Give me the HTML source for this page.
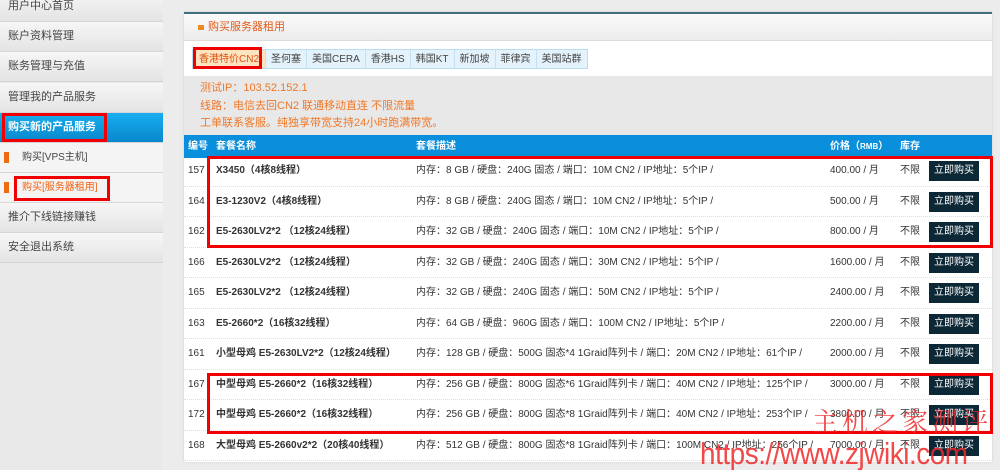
<!DOCTYPE html>
<html><head><meta charset="utf-8"><style>
*{margin:0;padding:0;box-sizing:border-box}
html,body{width:1000px;height:470px;overflow:hidden}
body{background:#ececec;font-family:"Liberation Sans","Noto Sans CJK SC",sans-serif;font-size:11px;color:#333;position:relative}
.side{position:absolute;left:0;top:0;width:163px;height:470px;background:#e9e9e9}
.si{position:absolute;left:0;width:163px;height:30px;line-height:29px;padding-left:8px;color:#444;font-size:11px;background:linear-gradient(#f6f6f6,#e4e4e4);border-bottom:1px solid #d5d5d5}
.sub{background:#f4f4f4;padding-left:22px;font-size:10px}
.rb{position:absolute;border:3px solid #f00000}
.panel{position:absolute;left:184px;top:12px;width:808px;height:450px;background:#fff;border-top:2px solid #3f6e80;box-shadow:0 0 2px #ccc}
.ph{height:27px;background:linear-gradient(#fafafa,#ececec);border-bottom:1px solid #ddd;line-height:27px;padding-left:24px;color:#e05a1a;font-size:11px;position:relative}
.ph:before{content:"";position:absolute;left:14px;top:11px;width:6px;height:5px;background:#f08a20}
.tabs{position:absolute;left:8px;top:35px;height:20px;display:flex;border:1px solid #b8dcf0;background:#e3f2fb}
.tab{padding:0 5px;line-height:19px;font-size:10px;color:#444;border-right:1px solid #c5e0f0;white-space:nowrap}
.info{position:absolute;left:0;top:62px;width:808px;height:59px;background:#e8e8e8;padding:4px 0 0 16px;color:#f07828;font-size:11px;line-height:17.5px}
.th{position:absolute;left:0;top:121px;width:808px;height:23px;background:#0a8fdc;color:#fff;font-weight:bold;font-size:10px;line-height:23px}
.row{position:absolute;left:0;width:808px;height:30.5px;border-bottom:1px dotted #ddd;line-height:30px;font-size:10px}
.c{position:absolute;white-space:nowrap}
.btn{position:absolute;left:745px;top:5px;width:50px;height:20px;background:#0c2836;color:#fff;line-height:20px;text-align:center;font-size:10px}
.wm{position:absolute;color:rgba(240,40,40,.85);white-space:nowrap;line-height:1}
</style></head><body>
<div class="side">
<div class="si" style="top:-8px">用户中心首页</div>
<div class="si" style="top:22px">账户资料管理</div>
<div class="si" style="top:52px">账务管理与充值</div>
<div class="si" style="top:83px">管理我的产品服务</div>
<div class="si" style="top:113px;background:linear-gradient(#17aef0,#0a86cc);color:#fff;font-weight:bold">购买新的产品服务</div>
<div class="si sub" style="top:143px">购买[VPS主机]</div>
<div class="si sub" style="top:173px;color:#f06010">购买[服务器租用]</div>
<div class="si" style="top:203px">推介下线链接赚钱</div>
<div class="si" style="top:233px">安全退出系统</div>
<div style="position:absolute;left:4px;top:152px;width:5px;height:11px;background:#f06a10"></div>
<div style="position:absolute;left:4px;top:182px;width:5px;height:11px;background:#f06a10"></div>
</div>
<div class="rb" style="left:2px;top:113px;width:105px;height:29px"></div>
<div class="rb" style="left:14px;top:176px;width:96px;height:25px"></div>

<div class="panel">
<div class="ph">购买服务器租用</div>
<div class="tabs">
<div class="tab" style="background:#fde4c0;color:#e05010;padding:0 6px">香港特价CN2</div>
<div class="tab">圣何塞</div><div class="tab">美国CERA</div><div class="tab">香港HS</div><div class="tab">韩国KT</div><div class="tab">新加坡</div><div class="tab">菲律宾</div><div class="tab" style="border:0">美国站群</div>
</div>
<div class="info">测试IP：103.52.152.1<br>线路：电信去回CN2 联通移动直连 不限流量<br>工单联系客服。纯独享带宽支持24小时跑满带宽。</div>
<div class="th"><span class="c" style="left:4px">编号</span><span class="c" style="left:32px">套餐名称</span><span class="c" style="left:232px">套餐描述</span><span class="c" style="left:646px">价格（<span style="font-size:8px">RMB</span>）</span><span class="c" style="left:716px">库存</span></div>
</div>
<div class="rb" style="left:193px;top:47px;width:69px;height:22px"></div>

<div id="rows" style="position:absolute;left:184px;top:156px">
<div class="row" style="top:0"><span class="c" style="left:4px">157</span><span class="c" style="left:32px">X3450（4核8线程）</span><span class="c" style="left:232px">内存：8 GB / 硬盘：240G 固态 / 端口：10M CN2 / IP地址：5个IP /</span><span class="c" style="left:646px">400.00 / 月</span><span class="c" style="left:716px">不限</span><div class="btn">立即购买</div></div>
<div class="row" style="top:30.5px"><span class="c" style="left:4px">164</span><span class="c" style="left:32px">E3-1230V2（4核8线程）</span><span class="c" style="left:232px">内存：8 GB / 硬盘：240G 固态 / 端口：10M CN2 / IP地址：5个IP /</span><span class="c" style="left:646px">500.00 / 月</span><span class="c" style="left:716px">不限</span><div class="btn">立即购买</div></div>
<div class="row" style="top:61px"><span class="c" style="left:4px">162</span><span class="c" style="left:32px">E5-2630LV2*2 （12核24线程）</span><span class="c" style="left:232px">内存：32 GB / 硬盘：240G 固态 / 端口：10M CN2 / IP地址：5个IP /</span><span class="c" style="left:646px">800.00 / 月</span><span class="c" style="left:716px">不限</span><div class="btn">立即购买</div></div>
<div class="row" style="top:91.5px"><span class="c" style="left:4px">166</span><span class="c" style="left:32px">E5-2630LV2*2 （12核24线程）</span><span class="c" style="left:232px">内存：32 GB / 硬盘：240G 固态 / 端口：30M CN2 / IP地址：5个IP /</span><span class="c" style="left:646px">1600.00 / 月</span><span class="c" style="left:716px">不限</span><div class="btn">立即购买</div></div>
<div class="row" style="top:122px"><span class="c" style="left:4px">165</span><span class="c" style="left:32px">E5-2630LV2*2 （12核24线程）</span><span class="c" style="left:232px">内存：32 GB / 硬盘：240G 固态 / 端口：50M CN2 / IP地址：5个IP /</span><span class="c" style="left:646px">2400.00 / 月</span><span class="c" style="left:716px">不限</span><div class="btn">立即购买</div></div>
<div class="row" style="top:152.5px"><span class="c" style="left:4px">163</span><span class="c" style="left:32px">E5-2660*2（16核32线程）</span><span class="c" style="left:232px">内存：64 GB / 硬盘：960G 固态 / 端口：100M CN2 / IP地址：5个IP /</span><span class="c" style="left:646px">2200.00 / 月</span><span class="c" style="left:716px">不限</span><div class="btn">立即购买</div></div>
<div class="row" style="top:183px"><span class="c" style="left:4px">161</span><span class="c" style="left:32px">小型母鸡 E5-2630LV2*2（12核24线程）</span><span class="c" style="left:232px">内存：128 GB / 硬盘：500G 固态*4 1Graid阵列卡 / 端口：20M CN2 / IP地址：61个IP /</span><span class="c" style="left:646px">2000.00 / 月</span><span class="c" style="left:716px">不限</span><div class="btn">立即购买</div></div>
<div class="row" style="top:213.5px"><span class="c" style="left:4px">167</span><span class="c" style="left:32px">中型母鸡 E5-2660*2（16核32线程）</span><span class="c" style="left:232px">内存：256 GB / 硬盘：800G 固态*6 1Graid阵列卡 / 端口：40M CN2 / IP地址：125个IP /</span><span class="c" style="left:646px">3000.00 / 月</span><span class="c" style="left:716px">不限</span><div class="btn">立即购买</div></div>
<div class="row" style="top:244px"><span class="c" style="left:4px">172</span><span class="c" style="left:32px">中型母鸡 E5-2660*2（16核32线程）</span><span class="c" style="left:232px">内存：256 GB / 硬盘：800G 固态*8 1Graid阵列卡 / 端口：40M CN2 / IP地址：253个IP /</span><span class="c" style="left:646px">3800.00 / 月</span><span class="c" style="left:716px">不限</span><div class="btn">立即购买</div></div>
<div class="row" style="top:274.5px"><span class="c" style="left:4px">168</span><span class="c" style="left:32px">大型母鸡 E5-2660v2*2（20核40线程）</span><span class="c" style="left:232px">内存：512 GB / 硬盘：800G 固态*8 1Graid阵列卡 / 端口：100M CN2 / IP地址：256个IP /</span><span class="c" style="left:646px">7000.00 / 月</span><span class="c" style="left:716px">不限</span><div class="btn">立即购买</div></div>
</div>
<style>#rows .c:nth-child(2){font-weight:bold}</style>
<div class="rb" style="left:207px;top:156px;width:786px;height:92px"></div>
<div class="rb" style="left:207px;top:373px;width:786px;height:61px"></div>
<div class="wm" style="left:812px;top:408px;font-size:26px;letter-spacing:4px;font-family:'Noto Serif CJK SC',serif">主机之家测评</div>
<div class="wm" style="left:700px;top:438px;font-size:31px;letter-spacing:-0.5px;font-family:'Liberation Sans',sans-serif;transform:scaleX(0.9);transform-origin:left top">https://www.zjwiki.com</div>
</body></html>
